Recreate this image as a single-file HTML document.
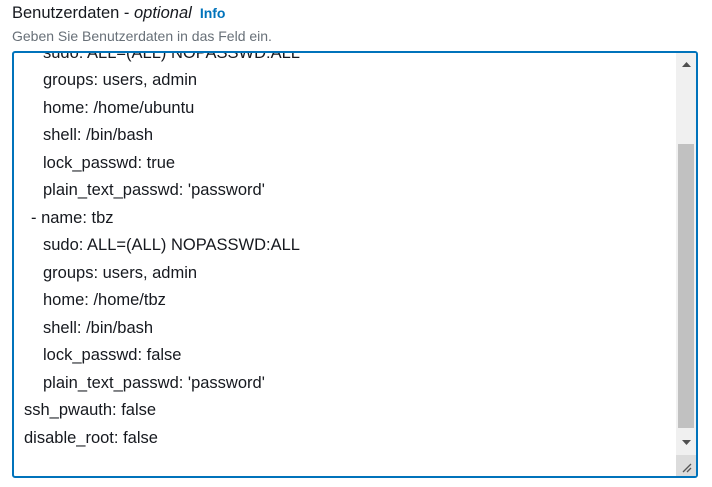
<!DOCTYPE html>
<html><head><style>
body{margin:0;width:712px;height:487px;background:#fff;font-family:"Liberation Sans",Arial,sans-serif;position:relative;overflow:hidden}
.t{position:absolute;left:12px;top:4px;font-size:16.5px;color:#16191f}
.t i{color:#16191f}
.t b{color:#0073bb;font-size:14px;margin-left:8px}
.d{position:absolute;left:12px;top:28px;font-size:14px;color:#687078}
.box{position:absolute;left:12px;top:51px;width:682px;height:423px;border:2px solid #0073bb;border-radius:3px;overflow:hidden;background:#fff}
.l{position:absolute;font-size:16.5px;color:#16191f;white-space:pre;line-height:20px}
.sb{position:absolute;right:0;top:0;width:20px;height:423px;background:#f0f0f0}
.th{position:absolute;left:2px;width:16px;top:91px;height:284px;background:#c1c1c1}
</style></head><body>
<div class="t">Benutzerdaten - <i>optional</i><b>Info</b></div>
<div class="d">Geben Sie Benutzerdaten in das Feld ein.</div>
<div class="box">
<div class="l" style="left:29px;top:-10px">sudo: ALL=(ALL) NOPASSWD:ALL</div>
<div class="l" style="left:29px;top:17px">groups: users, admin</div>
<div class="l" style="left:29px;top:45px">home: /home/ubuntu</div>
<div class="l" style="left:29px;top:72px">shell: /bin/bash</div>
<div class="l" style="left:29px;top:100px">lock_passwd: true</div>
<div class="l" style="left:29px;top:127px">plain_text_passwd: 'password'</div>
<div class="l" style="left:17px;top:155px">- name: tbz</div>
<div class="l" style="left:29px;top:182px">sudo: ALL=(ALL) NOPASSWD:ALL</div>
<div class="l" style="left:29px;top:210px">groups: users, admin</div>
<div class="l" style="left:29px;top:237px">home: /home/tbz</div>
<div class="l" style="left:29px;top:265px">shell: /bin/bash</div>
<div class="l" style="left:29px;top:292px">lock_passwd: false</div>
<div class="l" style="left:29px;top:320px">plain_text_passwd: 'password'</div>
<div class="l" style="left:10px;top:347px">ssh_pwauth: false</div>
<div class="l" style="left:10px;top:375px">disable_root: false</div>
<div class="sb">
<svg style="position:absolute;left:6px;top:9px" width="9" height="6"><path d="M0 5L4.5 0L9 5Z" fill="#505050"/></svg>
<div class="th"></div>
<svg style="position:absolute;left:6px;top:387px" width="9" height="6"><path d="M0 0L4.5 5L9 0Z" fill="#505050"/></svg>
<div style="position:absolute;left:0;top:402px;width:20px;height:21px;background:#dcdcdc"></div>
<svg style="position:absolute;left:6px;top:410px" width="10" height="10"><path d="M9 1L1 9M9 5L5 9" stroke="#555" stroke-width="1.3"/></svg>
</div>
</div>
</body></html>
